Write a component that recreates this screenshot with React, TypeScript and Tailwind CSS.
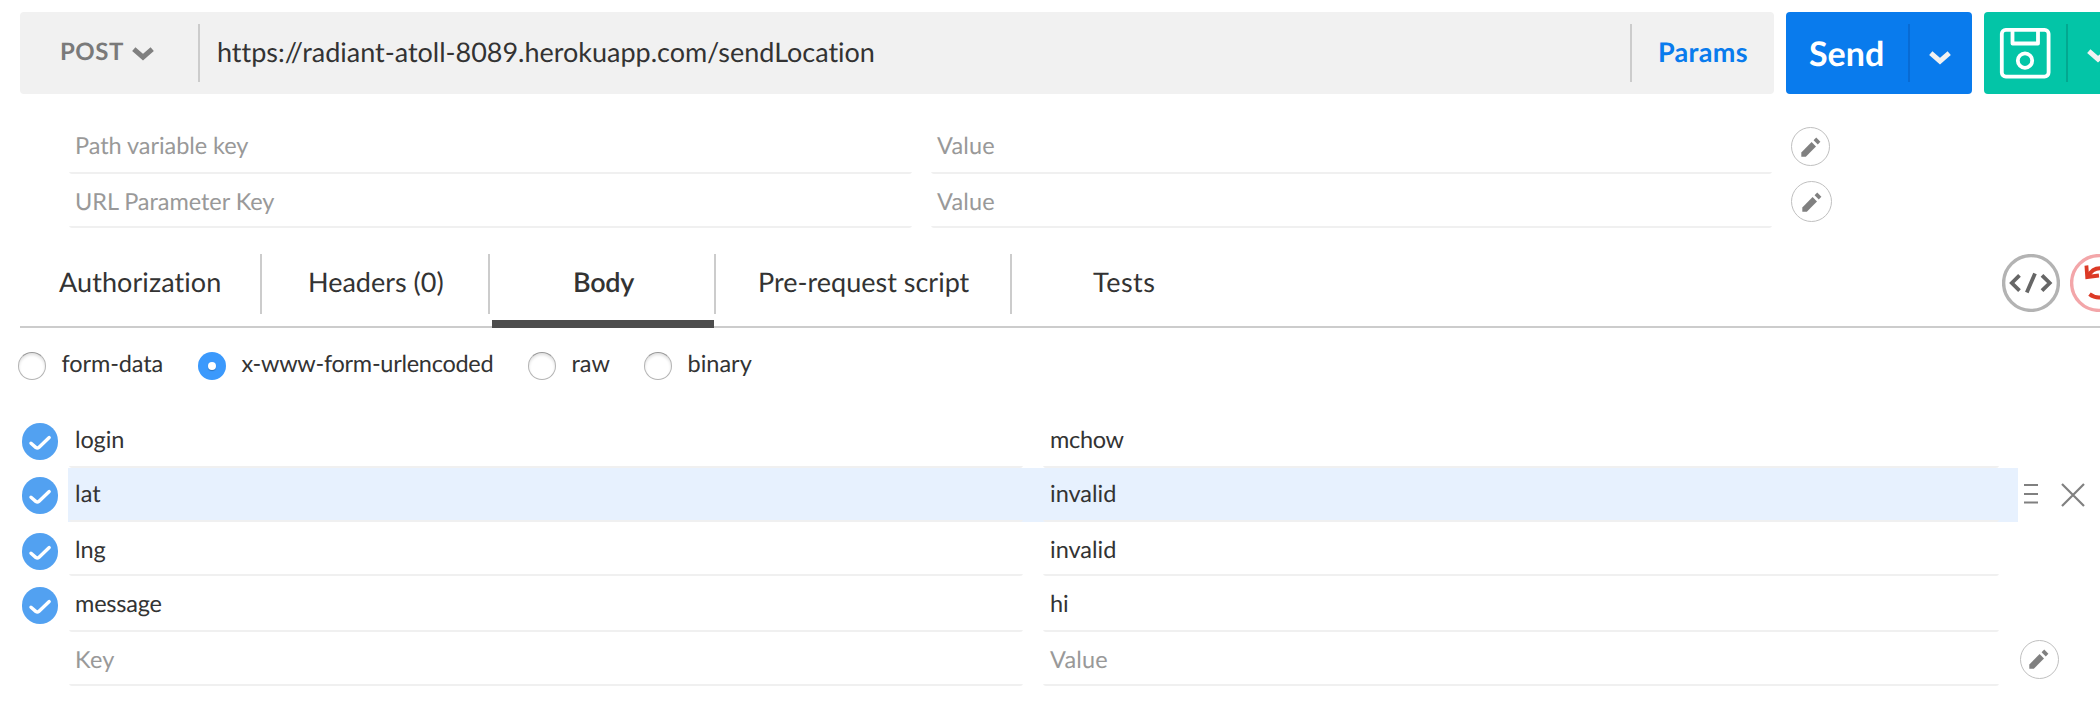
import { ReactNode } from "react";

function Chevron({ className }: { className: string }) {
  return (
    <svg viewBox="0 0 22 14" className={`h-[14px] w-[22px] shrink-0 ${className}`} fill="none" stroke="currentColor" strokeWidth="5">
      <path d="M1.8 2.2 L11 10.2 L20.2 2.2" />
    </svg>
  );
}

function Pencil({ className }: { className: string }) {
  return (
    <span className={`flex shrink-0 items-center justify-center rounded-full border-[1.5px] border-[#c0c0c0] ${className}`}>
      <svg viewBox="0 0 20 20" className="h-5 w-5" fill="#808080">
        <path d="M0.3 15.4 L10.6 5.1 L15 9.5 L4.8 19.7 L0.3 19.7 Z" />
        <path d="M12.6 3.2 L15.2 0.6 L19.4 4.8 L16.8 7.4 Z" />
      </svg>
    </span>
  );
}

function Check() {
  return (
    <span className="flex h-[36.6px] w-[36.6px] shrink-0 items-center justify-center rounded-full bg-[#52a1f1]">
      <svg viewBox="0 0 24 18" className="mt-[3px] h-[18px] w-6" fill="none" stroke="white" strokeWidth="3.4" strokeLinecap="round" strokeLinejoin="round">
        <path d="M3 9.2 L8 13.6 Q9.4 14.6 10.8 13.4 L21.2 3.6" />
      </svg>
    </span>
  );
}

function Field({ className, children }: { className: string; children: ReactNode }) {
  return <div className={`rounded-[3px] bg-[linear-gradient(#f0f0f0,#f0f0f0)] bg-[length:100%_2px] bg-bottom bg-no-repeat ${className}`}>{children}</div>;
}

function Radio({ checked }: { checked?: boolean }) {
  return checked ? (
    <span className="flex h-7 w-7 shrink-0 items-center justify-center rounded-full bg-[#3b99fc]">
      <span className="h-2 w-2 rounded-full bg-white shadow-[0_1px_1px_rgba(0,0,0,0.25)]" />
    </span>
  ) : (
    <span className="h-7 w-7 shrink-0 rounded-full border border-[#b4b4b4] border-t-[#989898] bg-white shadow-[inset_0_2px_3px_rgba(0,0,0,0.12)]" />
  );
}

const params = [
  { label: "Path variable key", row: "pt-2", pencil: "h-[39px] w-[39px] mt-[7px]" },
  { label: "URL Parameter Key", row: "pt-[10px]", pencil: "h-[41px] w-[41px] mt-[7px]" },
];

const tabs = [
  { label: "Authorization", box: "w-[242px]", pad: "pl-[39px] tracking-[0.08px]", rule: true },
  { label: "Headers (0)", box: "w-[228px]", pad: "pl-[46px]", rule: true },
  { label: "Body", box: "w-[226px]", pad: "pl-[83px] tracking-[-0.3px]", rule: true, active: true },
  { label: "Pre-request script", box: "w-[296px]", pad: "pl-[42px]", rule: true },
  { label: "Tests", box: "w-[200px]", pad: "pl-[81px] tracking-[0.5px]" },
];

const modes = [
  { label: "form-data", box: "w-[180px] tracking-[-0.1px]" },
  { label: "x-www-form-urlencoded", box: "w-[330px] tracking-[-0.28px]", checked: true },
  { label: "raw", box: "w-[116px]" },
  { label: "binary", box: "w-[120px]" },
];

const rows = [
  { k: "login", v: "mchow", kt: "tracking-[-0.1px]", vt: "tracking-[-0.3px]", h: "h-[54px]", pad: "pt-2", check: "mt-[9px]" },
  { k: "lat", v: "invalid", kt: "tracking-[0.1px]", vt: "tracking-normal", h: "h-[54px]", pad: "pt-2", check: "mt-[9px]", hover: true },
  { k: "lng", v: "invalid", kt: "tracking-[-0.1px]", vt: "tracking-normal", h: "h-[54px]", pad: "pt-[10px]", check: "mt-[11px]" },
  { k: "message", v: "hi", kt: "tracking-[-0.2px]", vt: "tracking-normal", h: "h-[56px]", pad: "pt-[10px]", check: "mt-[11px]" },
  { k: "Key", v: "Value", kt: "tracking-[0.2px]", vt: "tracking-[0.2px]", h: "h-[54px]", pad: "pt-[10px]", check: "", blank: true },
];

export default function App() {
  return (
    <div className="h-[706px] w-[2100px] overflow-hidden bg-white font-['Lato',sans-serif] text-[#333333] [font-variant-ligatures:none] [text-rendering:geometricPrecision]">
      <div className="flex w-[2200px] gap-3 pt-3 pl-5">
        <div className="flex h-[82px] w-[1754px] rounded bg-[#f1f1f1]">
          <div className="flex w-[178px] pl-[40px]">
            <span className="w-[72px] pt-[22px] text-2xl leading-9 font-bold tracking-[0.5px] text-[#7a7a7a]">POST</span>
            <Chevron className="mt-[35px] text-[#808080]" />
          </div>
          <div className="my-3 w-0.5 bg-[#cccccc]" />
          <div className="w-[1430px] pt-[20px] pl-[17px] text-[27px] leading-10 tracking-[-0.02px]">https://radiant-atoll-8089.herokuapp.com/sendLocation</div>
          <div className="my-3 w-0.5 bg-[#cccccc]" />
          <div className="pt-[20px] pl-[26px] text-[27px] leading-10 font-bold tracking-[0.3px] text-[#097bed]">Params</div>
        </div>
        <div className="flex h-[82px] w-[186px] rounded bg-[#097bed] text-white">
          <div className="w-[122px] pt-[17px] pl-[23px] text-[34px] leading-[50px] font-bold">Send</div>
          <div className="my-3 w-0.5 bg-[#086bd4]" />
          <Chevron className="mt-[39px] ml-[19px] text-[#f1f1f1]" />
        </div>
        <div className="flex h-[82px] w-[186px] rounded bg-[#03c5a7] text-white">
          <div className="w-[82px] pt-[15px] pl-[15px]">
            <svg viewBox="0 0 52 52" className="h-[52px] w-[52px]" fill="none" stroke="currentColor" strokeWidth="3.8">
              <rect x="2.8" y="2.8" width="46.8" height="46.8" rx="4" />
              <path d="M13.5 3 V16.5 H39 V3" strokeLinejoin="round" />
              <circle cx="26" cy="33.6" r="7.2" />
            </svg>
          </div>
          <div className="my-3 w-0.5 bg-[#03a890]" />
          <Chevron className="mt-[37px] ml-[19px] text-[#f1f1f1]" />
        </div>
      </div>

      <div className="pt-[26px] pl-[69px] text-[23.5px] leading-9 text-[#999999]">
        {params.map((p) => (
          <div key={p.label} className="flex h-[54px] gap-[19px]">
            <Field className={`w-[843px] pl-1.5 tracking-[-0.05px] ${p.row}`}>{p.label}</Field>
            <Field className={`w-[841px] pl-1.5 tracking-[0.2px] ${p.row}`}>Value</Field>
            <Pencil className={p.pencil} />
          </div>
        ))}
      </div>

      <div className="mt-[26px] ml-5 flex h-[74px] w-[2200px] border-b-2 border-[#cccccc] text-[27px] leading-10">
        {tabs.map((t) => (
          <div key={t.label} className={`flex h-[74px] flex-col justify-between ${t.box}`}>
            <div className={`h-[60px] pt-2 ${t.pad} ${t.rule ? "border-r-2 border-[#cccccc]" : ""} ${t.active ? "font-semibold" : ""}`}>{t.label}</div>
            {t.active && <div className="mr-0.5 ml-0.5 h-2 bg-[#4d4d4d]" />}
          </div>
        ))}
        <div className="ml-[790px] flex gap-[10px]">
          <svg viewBox="0 0 58 58" className="h-[58px] w-[58px]" fill="none">
            <circle cx="29" cy="29" r="27.4" stroke="#b3b3b3" strokeWidth="3.4" />
            <path d="M17.5 21.3 L9.8 29 L17.5 36.7 M40 21.3 L47.7 29 L40 36.7 M33 19.5 L24.8 38.5" stroke="#666666" strokeWidth="3.8" />
          </svg>
          <svg viewBox="0 0 58 58" className="h-[58px] w-[58px]" fill="none">
            <circle cx="29" cy="29" r="27.4" stroke="#f3a6a9" strokeWidth="3.4" />
            <path d="M18 22.5 C21 16.5 25 14.2 30 14.2 C39 14.2 44 21 44 29 C44 37 37 43.5 29 43.5 C25.5 43.5 22.5 42.5 19.5 40.2" stroke="#dc3a26" strokeWidth="4" />
            <path d="M16.4 11.5 L17.2 23 L29 21.5" stroke="#dc3a26" strokeWidth="3.8" />
          </svg>
        </div>
      </div>

      <div className="flex pt-6 pl-[18px] text-[23.5px] leading-9">
        {modes.map((m) => (
          <div key={m.label} className={`flex h-7 gap-[15.5px] ${m.box}`}>
            <Radio checked={m.checked} />
            <span className="-mt-1.5 whitespace-nowrap">{m.label}</span>
          </div>
        ))}
      </div>

      <div className="pt-[34px] text-[23.5px] leading-9">
        {rows.map((r) => (
          <div key={r.k} className={`flex pl-[21.5px] ${r.h}`}>
            <div className={`w-[46.5px] shrink-0 ${r.check}`}>{!r.blank && <Check />}</div>
            <div className={`flex w-[1950px] shrink-0 gap-5 pl-px ${r.hover ? "bg-[#e7f1fe]" : ""} ${r.blank ? "text-[#999999]" : ""}`}>
              <Field className={`w-[954px] pl-1.5 ${r.pad} ${r.kt}`}>{r.k}</Field>
              <Field className={`w-[956px] pl-[7px] ${r.pad} ${r.vt}`}>{r.v}</Field>
            </div>
            {r.hover && (
              <svg viewBox="0 0 70 54" className="h-[54px] w-[70px]" fill="none" stroke="#808080">
                <path d="M6 17 H20 M6 26 H20 M6 34.5 H20" strokeWidth="2" />
                <path d="M44 16 L66 38 M66 16 L44 38" strokeWidth="2.2" />
              </svg>
            )}
            {r.blank && <Pencil className="mt-[7.5px] ml-[1.5px] h-[39px] w-[39px]" />}
          </div>
        ))}
      </div>
    </div>
  );
}
